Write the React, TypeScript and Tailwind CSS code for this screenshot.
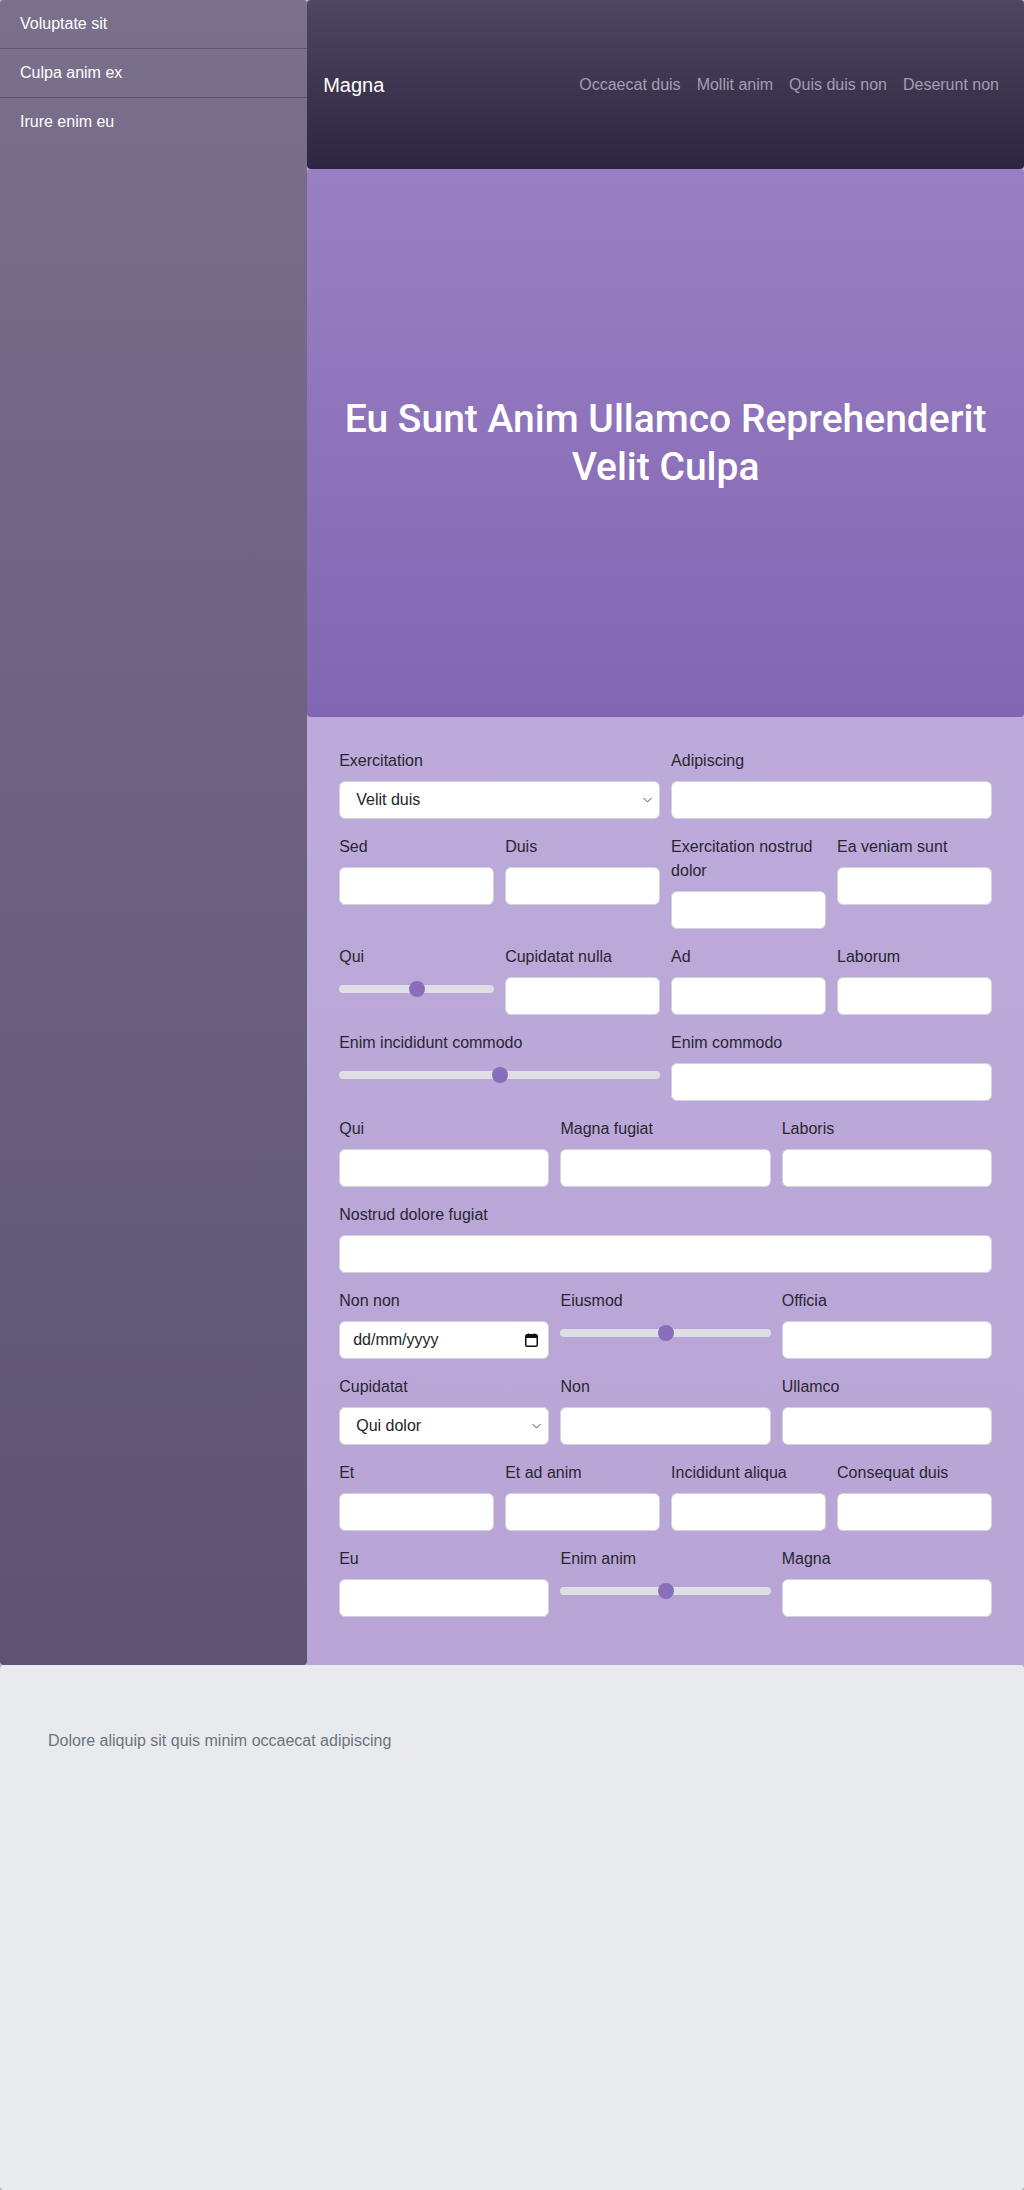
import React from "react";

type Field = {
  label: string;
  kind?: "text" | "select" | "range" | "date";
  value?: string;
};

const rows: { cols: string; fields: Field[] }[] = [
  {
    cols: "grid-cols-2",
    fields: [
      { label: "Exercitation", kind: "select", value: "Velit duis" },
      { label: "Adipiscing" },
    ],
  },
  {
    cols: "grid-cols-4",
    fields: [
      { label: "Sed" },
      { label: "Duis" },
      { label: "Exercitation nostrud dolor" },
      { label: "Ea veniam sunt" },
    ],
  },
  {
    cols: "grid-cols-4",
    fields: [
      { label: "Qui", kind: "range" },
      { label: "Cupidatat nulla" },
      { label: "Ad" },
      { label: "Laborum" },
    ],
  },
  {
    cols: "grid-cols-2",
    fields: [
      { label: "Enim incididunt commodo", kind: "range" },
      { label: "Enim commodo" },
    ],
  },
  {
    cols: "grid-cols-3",
    fields: [{ label: "Qui" }, { label: "Magna fugiat" }, { label: "Laboris" }],
  },
  { cols: "grid-cols-1", fields: [{ label: "Nostrud dolore fugiat" }] },
  {
    cols: "grid-cols-3",
    fields: [
      { label: "Non non", kind: "date" },
      { label: "Eiusmod", kind: "range" },
      { label: "Officia" },
    ],
  },
  {
    cols: "grid-cols-3",
    fields: [
      { label: "Cupidatat", kind: "select", value: "Qui dolor" },
      { label: "Non" },
      { label: "Ullamco" },
    ],
  },
  {
    cols: "grid-cols-4",
    fields: [
      { label: "Et" },
      { label: "Et ad anim" },
      { label: "Incididunt aliqua" },
      { label: "Consequat duis" },
    ],
  },
  {
    cols: "grid-cols-3",
    fields: [{ label: "Eu" }, { label: "Enim anim", kind: "range" }, { label: "Magna" }],
  },
];

const inputBase =
  "block w-full h-[38px] rounded-md border border-[#ced4da] bg-white text-base text-[#212529] outline-none";

function Control({ field }: { field: Field }) {
  if (field.kind === "select") {
    return (
      <div className="relative">
        <select
          defaultValue={field.value}
          className={`${inputBase} appearance-none pl-4 pr-8 text-[#343a40]`}
        >
          <option>{field.value}</option>
        </select>
        <svg
          className="pointer-events-none absolute right-2 top-1/2 -translate-y-1/2"
          width="9"
          height="6"
          viewBox="0 0 9 6"
          fill="none"
        >
          <path d="M0.5 1l4 4 4-4" stroke="#4a4a52" strokeWidth="1" />
        </svg>
      </div>
    );
  }
  if (field.kind === "range") {
    return (
      <input
        type="range"
        defaultValue={50}
        className="block w-full h-6 appearance-none bg-transparent [&::-webkit-slider-runnable-track]:h-2 [&::-webkit-slider-runnable-track]:rounded-full [&::-webkit-slider-runnable-track]:bg-[#dedfe4] [&::-webkit-slider-thumb]:appearance-none [&::-webkit-slider-thumb]:w-4 [&::-webkit-slider-thumb]:h-4 [&::-webkit-slider-thumb]:-mt-1 [&::-webkit-slider-thumb]:rounded-full [&::-webkit-slider-thumb]:bg-[#8a6dbb]"
      />
    );
  }
  if (field.kind === "date") {
    return (
      <div className="relative">
        <input type="text" defaultValue="dd/mm/yyyy" className={`${inputBase} pl-[13px] pr-10`} />
        <svg
          className="pointer-events-none absolute right-[11px] top-1/2 -translate-y-1/2"
          width="13"
          height="14"
          viewBox="0 0 13 14"
          fill="none"
        >
          <rect x="0.75" y="1.75" width="11.5" height="11.5" rx="1.5" stroke="#111" strokeWidth="1.5" />
          <rect x="1" y="2" width="11" height="3" fill="#111" />
          <path d="M3.5 0.5v2M9.5 0.5v2" stroke="#111" strokeWidth="1.5" />
        </svg>
      </div>
    );
  }
  return <input type="text" className={`${inputBase} px-3`} />;
}

export default function App() {
  return (
    <div
      className="min-h-[2190px] flex flex-col bg-[#b9a7d8] text-base leading-6"
      style={{ fontFamily: '"Liberation Sans", Arial, sans-serif' }}
    >
      <div className="flex">
        {/* Sidebar */}
        <aside className="w-[30%] shrink-0 rounded bg-linear-to-b from-[#7a708c] to-[#5e5373]">
          {["Voluptate sit", "Culpa anim ex", "Irure enim eu"].map((item, i) => (
            <div
              key={item}
              className={`px-5 py-3 text-white ${i < 2 ? "border-b border-[#5f5570]" : ""}`}
            >
              {item}
            </div>
          ))}
        </aside>

        <main className="flex-1 flex flex-col">
          {/* Top nav */}
          <header className="h-[169px] flex items-center justify-between pl-4 pr-[17px] rounded bg-linear-to-b from-[#4f4761] to-[#2e2640]">
            <span className="text-white text-xl">Magna</span>
            <nav className="flex">
              {["Occaecat duis", "Mollit anim", "Quis duis non", "Deserunt non"].map((l) => (
                <a key={l} className="px-2 text-[#a49db2]">
                  {l}
                </a>
              ))}
            </nav>
          </header>

          {/* Hero */}
          <section className="h-[548px] flex items-center justify-center rounded bg-linear-to-b from-[#9a80c3] to-[#8266b3] px-6">
            <h1
              className="text-white text-center text-[39px] leading-[48px] font-medium"
              style={{ fontFamily: 'Roboto, "Liberation Sans", sans-serif' }}
            >
              Eu Sunt Anim Ullamco Reprehenderit
              <br />
              Velit Culpa
            </h1>
          </section>

          {/* Form */}
          <form className="px-8 pt-8 pb-8 rounded bg-linear-to-b from-[#bcaada] to-[#b8a5d6]">
            {rows.map((row, ri) => (
              <div key={ri} className={`grid ${row.cols} gap-x-[11px] mb-4`}>
                {row.fields.map((f, fi) => (
                  <div key={fi}>
                    <label className="block mb-2 text-[#2a2630]">{f.label}</label>
                    <Control field={f} />
                  </div>
                ))}
              </div>
            ))}
          </form>
        </main>
      </div>

      {/* Footer */}
      <footer className="flex-1 rounded bg-[#e9eaee] pt-16 px-12">
        <p className="text-[#6c757d]">Dolore aliquip sit quis minim occaecat adipiscing</p>
      </footer>
    </div>
  );
}
